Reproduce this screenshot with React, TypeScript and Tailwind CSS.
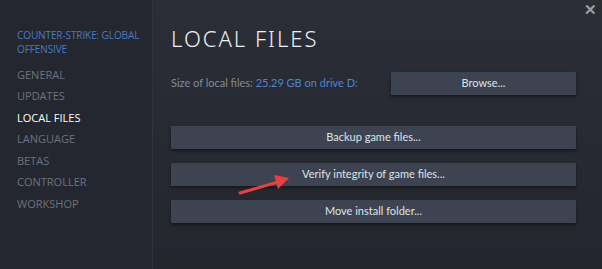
import React from "react";

export default function App() {
  const nav = ["GENERAL", "UPDATES", "LOCAL FILES", "LANGUAGE", "BETAS", "CONTROLLER", "WORKSHOP"];
  const btn =
    "h-[23px] flex items-center justify-center bg-[#3d4350] text-[#dfe3e8] text-[11px] shadow-[0_2px_3px_rgba(0,0,0,0.45)]";
  return (
    <div
      className="w-[602px] h-[269px] flex overflow-hidden"
      style={{ fontFamily: '"Open Sans", "Noto Sans", sans-serif' }}
    >
      <div className="w-[153px] h-full bg-[#24272f] border-r border-[#30333c] flex flex-col pl-[17px] pt-[28px]">
        <div className="text-[#4a7bc0] text-[10px] leading-[14px] tracking-[-0.1px]">
          COUNTER-STRIKE: GLOBAL
          <br />
          OFFENSIVE
        </div>
        <div className="flex flex-col mt-[8px]">
          {nav.map((n) => (
            <div
              key={n}
              className={`h-[21.5px] flex items-center text-[11px] ${
                n === "LOCAL FILES" ? "text-white" : "text-[#6e737c]"
              }`}
            >
              {n}
            </div>
          ))}
        </div>
      </div>
      <div className="relative flex-1 h-full bg-gradient-to-b from-[#2b2e37] to-[#23262d] pl-[18px] pr-[26px] pt-[24px]">
        <div className="absolute right-[5px] top-[2px] text-[#9a9fa8] text-[15px] font-semibold leading-none">✕</div>
        <div
          className="text-[#eef0f3] text-[22px] font-light tracking-[2px] leading-[28px]"
          style={{ fontFamily: '"Noto Sans", "Open Sans", sans-serif' }}
        >
          LOCAL FILES
        </div>
        <div className="flex items-center justify-between mt-[20px]">
          <div className="text-[11px] text-[#858b93]" style={{ fontFamily: 'Lato, "Open Sans", sans-serif' }}>
            Size of local files: <span className="text-[#4a86d2]">25.29 GB on drive D:</span>
          </div>
          <div className={`${btn} w-[185px]`} style={{ fontFamily: 'Lato, "Open Sans", sans-serif' }}>
            Browse...
          </div>
        </div>
        <div
          className="flex flex-col gap-[14px] mt-[31px]"
          style={{ fontFamily: 'Lato, "Open Sans", sans-serif' }}
        >
          <div className={btn}>Backup game files...</div>
          <div className={btn}>Verify integrity of game files...</div>
          <div className={btn}>Move install folder...</div>
        </div>
        <svg className="absolute left-[83px] top-[172px]" width="56" height="26" viewBox="0 0 56 26">
          <line x1="4" y1="21" x2="42" y2="10" stroke="#e8403f" strokeWidth="3" strokeLinecap="round" />
          <polygon points="53,6 38,3 42,17" fill="#e8403f" />
        </svg>
      </div>
    </div>
  );
}
